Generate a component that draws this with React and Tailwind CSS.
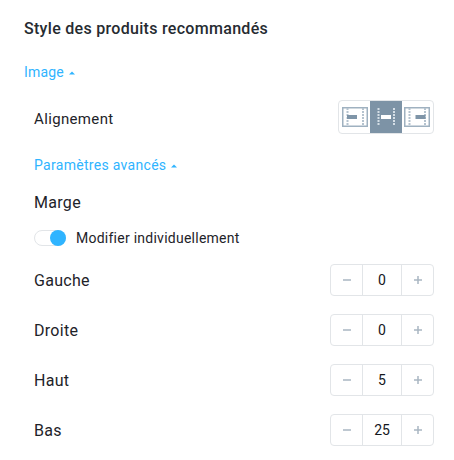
const font = { fontFamily: "Roboto, sans-serif" };

function Caret() {
  return (
    <svg width="6" height="4" viewBox="0 0 6 4" className="ml-[5px] mt-[1px]">
      <path d="M0 3.5 L3 0.5 L6 3.5 Z" fill="#2fb4ff" />
    </svg>
  );
}

function AlignIcon({ pos, active }) {
  const dash = active ? "#d5dee6" : "#b5c3cf";
  const barX = pos === 0 ? 5 : pos === 1 ? 8 : 11.5;
  return (
    <svg width="26" height="20" viewBox="0 0 26 20">
      {!active && <rect x="0.75" y="0.75" width="24.5" height="18.5" fill="none" stroke="#9fb1c0" strokeWidth="1.5" />}
      <line x1="5.5" y1="1" x2="5.5" y2="19" stroke={dash} strokeWidth="2" strokeDasharray="2 1" />
      <line x1="21" y1="1" x2="21" y2="19" stroke={dash} strokeWidth="2" strokeDasharray="2 1" />
      <rect x={barX} y="8" width="10" height="4" fill={active ? "#ffffff" : "#7f95a8"} />
    </svg>
  );
}

function Stepper({ value }) {
  return (
    <div className="flex h-[32px] w-[104px] items-stretch rounded-[4px] border border-[#e2e5e8] bg-white">
      <div className="flex w-[32px] items-center justify-center border-r border-[#e2e5e8]">
        <svg width="8" height="8" viewBox="0 0 8 8"><rect x="0" y="3.25" width="8" height="1.5" fill="#a9b6c2" /></svg>
      </div>
      <div className="flex flex-1 items-center justify-center text-[14px] text-[#14181d]">{value}</div>
      <div className="flex w-[32px] items-center justify-center border-l border-[#e2e5e8]">
        <svg width="8" height="8" viewBox="0 0 8 8"><path d="M0 3.25h3.25V0h1.5v3.25H8v1.5H4.75V8h-1.5V4.75H0z" fill="#a9b6c2" /></svg>
      </div>
    </div>
  );
}

function Row({ label, value }) {
  return (
    <div className="flex h-[32px] items-center justify-between pl-[34px] pr-[20px]">
      <span className="pt-[2px] text-[16px] tracking-[0.3px] text-[#1e2329]">{label}</span>
      <Stepper value={value} />
    </div>
  );
}

export default function App() {
  return (
    <div className="h-[460px] w-[454px] overflow-hidden bg-white" style={font}>
      <div className="pl-[24px] pt-[20px] text-[16px] font-medium leading-[18px] tracking-[0.3px] text-[#262b31]">
        Style des produits recommandés
      </div>
      <div className="mt-[26px] flex h-[16px] items-center pl-[24px] text-[14px] tracking-[0.2px] text-[#2fb4ff]">
        Image <Caret />
      </div>
      <div className="mt-[20px] flex h-[34px] items-center justify-between pl-[34px] pr-[20px]">
        <span className="pt-[4px] text-[15px] tracking-[0.35px] text-[#1e2329]">Alignement</span>
        <div className="flex h-[34px] w-[96px] items-stretch overflow-hidden rounded-[4px] border border-[#e2e5e8]">
          <div className="flex flex-1 items-center justify-center"><AlignIcon pos={0} /></div>
          <div className="flex flex-1 items-center justify-center bg-[#7d93a6]"><AlignIcon pos={1} active /></div>
          <div className="flex flex-1 items-center justify-center"><AlignIcon pos={2} /></div>
        </div>
      </div>
      <div className="mt-[23px] flex h-[16px] items-center pl-[34px] text-[14px] tracking-[0.3px] text-[#2fb4ff]">
        Paramètres avancés <Caret />
      </div>
      <div className="mt-[21px] pl-[34px] text-[16px] leading-[18px] tracking-[0.3px] text-[#1e2329]">Marge</div>
      <div className="mt-[18px] flex h-[16px] items-center pl-[34px]">
        <div className="relative h-[16px] w-[32px] rounded-full border border-[#e2e5e8] bg-white">
          <div className="absolute right-[-1px] top-[-1px] h-[16px] w-[16px] rounded-full bg-[#2fb4ff]" />
        </div>
        <span className="ml-[10px] text-[14px] tracking-[0.25px] text-[#1e2329]">Modifier individuellement</span>
      </div>
      <div className="mt-[18px] flex flex-col gap-[18px]">
        <Row label="Gauche" value="0" />
        <Row label="Droite" value="0" />
        <Row label="Haut" value="5" />
        <Row label="Bas" value="25" />
      </div>
    </div>
  );
}
